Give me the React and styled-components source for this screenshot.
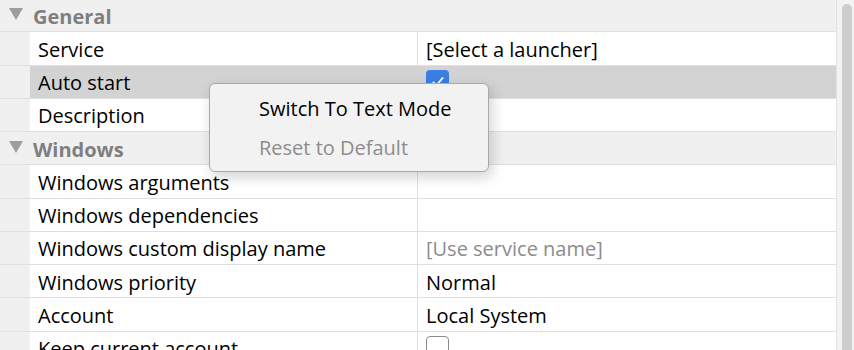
import React from "react";
import styled, { createGlobalStyle } from "styled-components";

const Global = createGlobalStyle`
  html, body { margin: 0; padding: 0; background: #ffffff; overflow: hidden; }
  body { font-family: "Open Sans", "Noto Sans", sans-serif; }
`;

const Frame = styled.div`
  position: relative;
  display: flex;
  width: 854px;
  height: 350px;
  overflow: hidden;
`;

const Grid = styled.div`
  width: 836px;
  border-right: 1px solid #e2e2e2;
  margin-top: -1px;
  display: flex;
  flex-direction: column;
`;

const Row = styled.div`
  display: grid;
  grid-template-columns: 30px 388px 1fr;
  height: 33.25px;
  flex: none;
  box-sizing: border-box;
  border-bottom: 1px solid #e0e0e0;
  font-size: 20px;
  color: #000;
`;

const Gutter = styled.div`
  background: #f0f0f0;
`;

const NameCell = styled.div`
  display: flex;
  align-items: center;
  padding: 2px 0 0 8px;
  background: ${(p) => (p.$selected ? "#d3d3d3" : "#ffffff")};
  border-right: 1px solid ${(p) => (p.$selected ? "#d3d3d3" : "#e0e0e0")};
  white-space: nowrap;
`;

const ValueCell = styled.div`
  display: flex;
  align-items: center;
  padding: 2px 0 0 8px;
  background: ${(p) => (p.$selected ? "#d3d3d3" : "#ffffff")};
  color: ${(p) => (p.$muted ? "#8c8c8c" : "#000")};
  white-space: nowrap;
`;

const HeaderRow = styled.div`
  display: flex;
  align-items: center;
  gap: 10px;
  height: 33.25px;
  flex: none;
  box-sizing: border-box;
  padding: 2px 0 0 9px;
  background: #f0f0f0;
  border-bottom: 1px solid #e0e0e0;
  font-size: 20px;
  font-weight: 700;
  color: #7f7f7f;
`;

const Triangle = styled.span`
  width: 0;
  height: 0;
  border-left: 7px solid transparent;
  border-right: 7px solid transparent;
  border-top: 12px solid #9d9d9d;
  margin-top: -4px;
`;

const Check = styled.span`
  box-sizing: border-box;
  width: 23px;
  height: 23px;
  margin-top: -2px;
  border-radius: 4px;
  display: inline-flex;
  align-items: center;
  justify-content: center;
  background: ${(p) => (p.$checked ? "#3b7fe4" : "#ffffff")};
  border: ${(p) => (p.$checked ? "none" : "1.5px solid #8a8a8a")};
`;

const Scroll = styled.div`
  flex: 1;
  background: #f3f3f3;
  padding: 4px 2px 0 5px;
  box-sizing: border-box;
`;

const Thumb = styled.div`
  width: 10px;
  height: 400px;
  border-radius: 5px;
  background: #cdcdcd;
`;

const Menu = styled.div`
  position: absolute;
  left: 209px;
  top: 83px;
  width: 280px;
  height: 89px;
  box-sizing: border-box;
  background: #f2f2f2;
  border: 1.5px solid #a9a9a9;
  border-radius: 6px;
  box-shadow: 3px 5px 14px rgba(0, 0, 0, 0.18);
  padding-top: 5px;
  display: flex;
  flex-direction: column;
`;

const MenuItem = styled.div`
  height: 39px;
  display: flex;
  align-items: center;
  padding-left: 49px;
  font-size: 20px;
  color: ${(p) => (p.$disabled ? "#8d8d8d" : "#000")};
`;

const Section = ({ title }) => (
  <HeaderRow>
    <Triangle />
    {title}
  </HeaderRow>
);

const Prop = ({ name, value, muted, selected, check }) => (
  <Row>
    <Gutter />
    <NameCell $selected={selected}>{name}</NameCell>
    <ValueCell $selected={selected} $muted={muted}>
      {check ? (
        <Check $checked={check === "on"}>
          {check === "on" && (
            <svg width="14" height="14" viewBox="0 0 14 14">
              <path d="M2.5 7.5 L5.5 10.5 L11.5 3" fill="none" stroke="#fff" strokeWidth="2" strokeLinecap="round" strokeLinejoin="round" />
            </svg>
          )}
        </Check>
      ) : (
        value
      )}
    </ValueCell>
  </Row>
);

export default function App() {
  return (
    <Frame>
      <Global />
      <Grid>
        <Section title="General" />
        <Prop name="Service" value="[Select a launcher]" />
        <Prop name="Auto start" check="on" selected />
        <Prop name="Description" value="" />
        <Section title="Windows" />
        <Prop name="Windows arguments" value="" />
        <Prop name="Windows dependencies" value="" />
        <Prop name="Windows custom display name" value="[Use service name]" muted />
        <Prop name="Windows priority" value="Normal" />
        <Prop name="Account" value="Local System" />
        <Prop name="Keep current account" check="off" />
      </Grid>
      <Scroll>
        <Thumb />
      </Scroll>
      <Menu>
        <MenuItem>Switch To Text Mode</MenuItem>
        <MenuItem $disabled>Reset to Default</MenuItem>
      </Menu>
    </Frame>
  );
}
